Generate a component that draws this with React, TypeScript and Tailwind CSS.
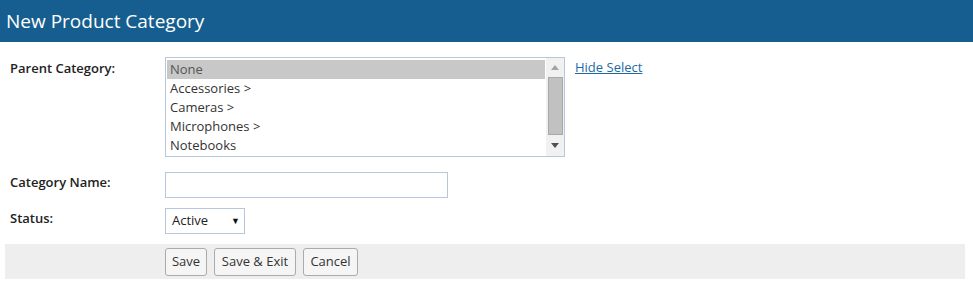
import React, { useState } from 'react';

const categories = ['None', 'Accessories >', 'Cameras >', 'Microphones >', 'Notebooks'];

const buttons = [
  { label: 'Save', width: 'w-[42px]' },
  { label: 'Save & Exit', width: 'w-[82px]' },
  { label: 'Cancel', width: 'w-[55px]' },
];

const font = { fontFamily: '"Open Sans", "Noto Sans", Arial, sans-serif' };

export default function App() {
  const [selected, setSelected] = useState(0);
  const [name, setName] = useState('');

  return (
    <div className="min-h-[287px] bg-white text-[13px] text-[#222]" style={font}>
      {/* Header */}
      <div className="h-[42px] bg-[#155e8f] flex items-center px-[6px]">
        <h1 className="text-[19px] text-white leading-none">New Product Category</h1>
      </div>

      <div className="px-[5px]">
        {/* Parent Category */}
        <div className="flex mt-[15px]">
          <label className="w-[160px] pl-[5px] pt-[2px] font-semibold">Parent Category:</label>
          <div className="flex w-[400px] h-[100px] border border-[#b7c6dc] bg-white">
            <div className="flex-1 pt-[2px] pl-[1px] pr-[1px]">
              {categories.map((c, i) => (
                <div
                  key={c}
                  onClick={() => setSelected(i)}
                  className={`h-[19px] leading-[19px] pl-[3px] cursor-default ${
                    selected === i ? 'bg-[#c8c8c8] text-[#555]' : 'text-[#333]'
                  }`}
                >
                  {c}
                </div>
              ))}
            </div>
            {/* Scrollbar */}
            <div className="w-[18px] bg-[#f1f1f1] flex flex-col items-center">
              <div className="h-[19px] flex items-center justify-center">
                <svg width="8" height="5" viewBox="0 0 8 5">
                  <path d="M4 0 L8 5 L0 5 Z" fill="#a3a3a3" />
                </svg>
              </div>
              <div className="w-[15px] h-[58px] bg-[#c1c1c1] border border-[#a8a8a8]" />
              <div className="flex-1 flex items-center justify-center">
                <svg width="8" height="5" viewBox="0 0 8 5">
                  <path d="M0 0 L8 0 L4 5 Z" fill="#505050" />
                </svg>
              </div>
            </div>
          </div>
          <a href="#" className="ml-[10px] text-[#1b6aa6] underline leading-[19px] pt-[1px]">
            Hide Select
          </a>
        </div>

        {/* Category Name */}
        <div className="flex mt-[15px]">
          <label className="w-[160px] pl-[5px] pt-[1px] font-semibold">Category Name:</label>
          <input
            value={name}
            onChange={(e) => setName(e.target.value)}
            className="w-[283px] h-[26px] border border-[#b7c6dc] px-[6px] outline-none"
          />
        </div>

        {/* Status */}
        <div className="flex mt-[10px]">
          <label className="w-[160px] pl-[5px] pt-[1px] font-semibold">Status:</label>
          <div className="w-[80px] h-[26px] border border-[#b7c6dc] flex items-center justify-between pl-[6px] pr-[4px] text-[#222]">
            <span>Active</span>
            <span className="text-[9px] text-[#111]">▼</span>
          </div>
        </div>

        {/* Buttons */}
        <div className="mt-[10px] mr-[3px] h-[35px] bg-[#eeeeee] flex items-center gap-[7px] pl-[160px]">
          {buttons.map((b) => (
            <button
              key={b.label}
              className={`${b.width} h-[28px] bg-[#f5f5f5] border border-[#ababab] rounded-[3px] text-[#333] text-[13px]`}
            >
              {b.label}
            </button>
          ))}
        </div>
      </div>
    </div>
  );
}
